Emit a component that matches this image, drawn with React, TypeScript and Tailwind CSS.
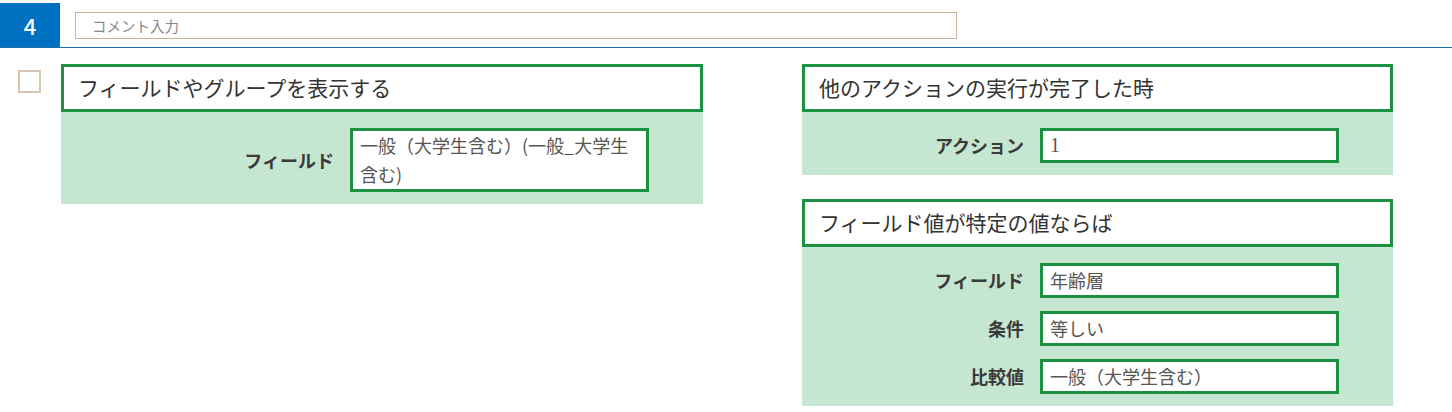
import React from 'react';

const jp = { fontFamily: '"Noto Sans CJK JP", "Noto Sans", sans-serif' };

interface Row {
  label: string;
  value: React.ReactNode;
}

function FieldRow({ label, value }: Row) {
  return (
    <div className="flex items-center justify-end gap-[16px]">
      <span className="text-[18px] font-bold text-[#3a3a3a]">{label}</span>
      <div className="w-[299px] border-[3px] border-[#1d9142] bg-white px-[7px] text-[18px] leading-[29px] text-[#555]">
        {value}
      </div>
    </div>
  );
}

function Card({ title, rows, className }: { title: string; rows: Row[]; className?: string }) {
  return (
    <div className={className}>
      <div className="flex h-[48px] items-center border-[3px] border-[#1d9142] bg-white pl-[14px] text-[21px] text-[#333]">
        {title}
      </div>
      <div className="flex flex-col gap-[13px] bg-[#c5e6d0] pt-[16px] pr-[54px] pb-[12px]">
        {rows.map((r) => (
          <FieldRow key={r.label} label={r.label} value={r.value} />
        ))}
      </div>
    </div>
  );
}

export default function App() {
  return (
    <div className="h-[412px] w-[1452px] bg-white" style={jp}>
      {/* top bar */}
      <div className="flex items-start border-b border-[#1f6eb0] pt-[3px]">
        <div className="flex h-[44px] w-[60px] items-center justify-center bg-[#0070c0] text-[22px] font-medium text-white">
          4
        </div>
        <div className="ml-[15px] mt-[9px] flex h-[27px] w-[882px] items-center border border-[#c8b49a] pl-[16px] text-[14.5px] text-[#888]">
          コメント入力
        </div>
      </div>

      <div className="flex pt-[16px]">
        <div className="ml-[18px] mt-[6px] h-[23px] w-[23px] border-2 border-[#d6c6b3]" />
        <Card
          className="ml-[20px] w-[642px]"
          title="フィールドやグループを表示する"
          rows={[{ label: 'フィールド', value: '一般（大学生含む）(一般_大学生含む)' }]}
        />
        <div className="ml-[99px] flex w-[591px] flex-col gap-[24px]">
          <Card
            title="他のアクションの実行が完了した時"
            rows={[
              {
                label: 'アクション',
                value: (
                  <span
                    className="block h-[29px] text-[20px] leading-[29px]"
                    style={{ fontFamily: '"Liberation Serif", serif' }}
                  >
                    1
                  </span>
                ),
              },
            ]}
          />
          <Card
            title="フィールド値が特定の値ならば"
            rows={[
              { label: 'フィールド', value: '年齢層' },
              { label: '条件', value: '等しい' },
              { label: '比較値', value: '一般（大学生含む）' },
            ]}
          />
        </div>
      </div>
    </div>
  );
}
